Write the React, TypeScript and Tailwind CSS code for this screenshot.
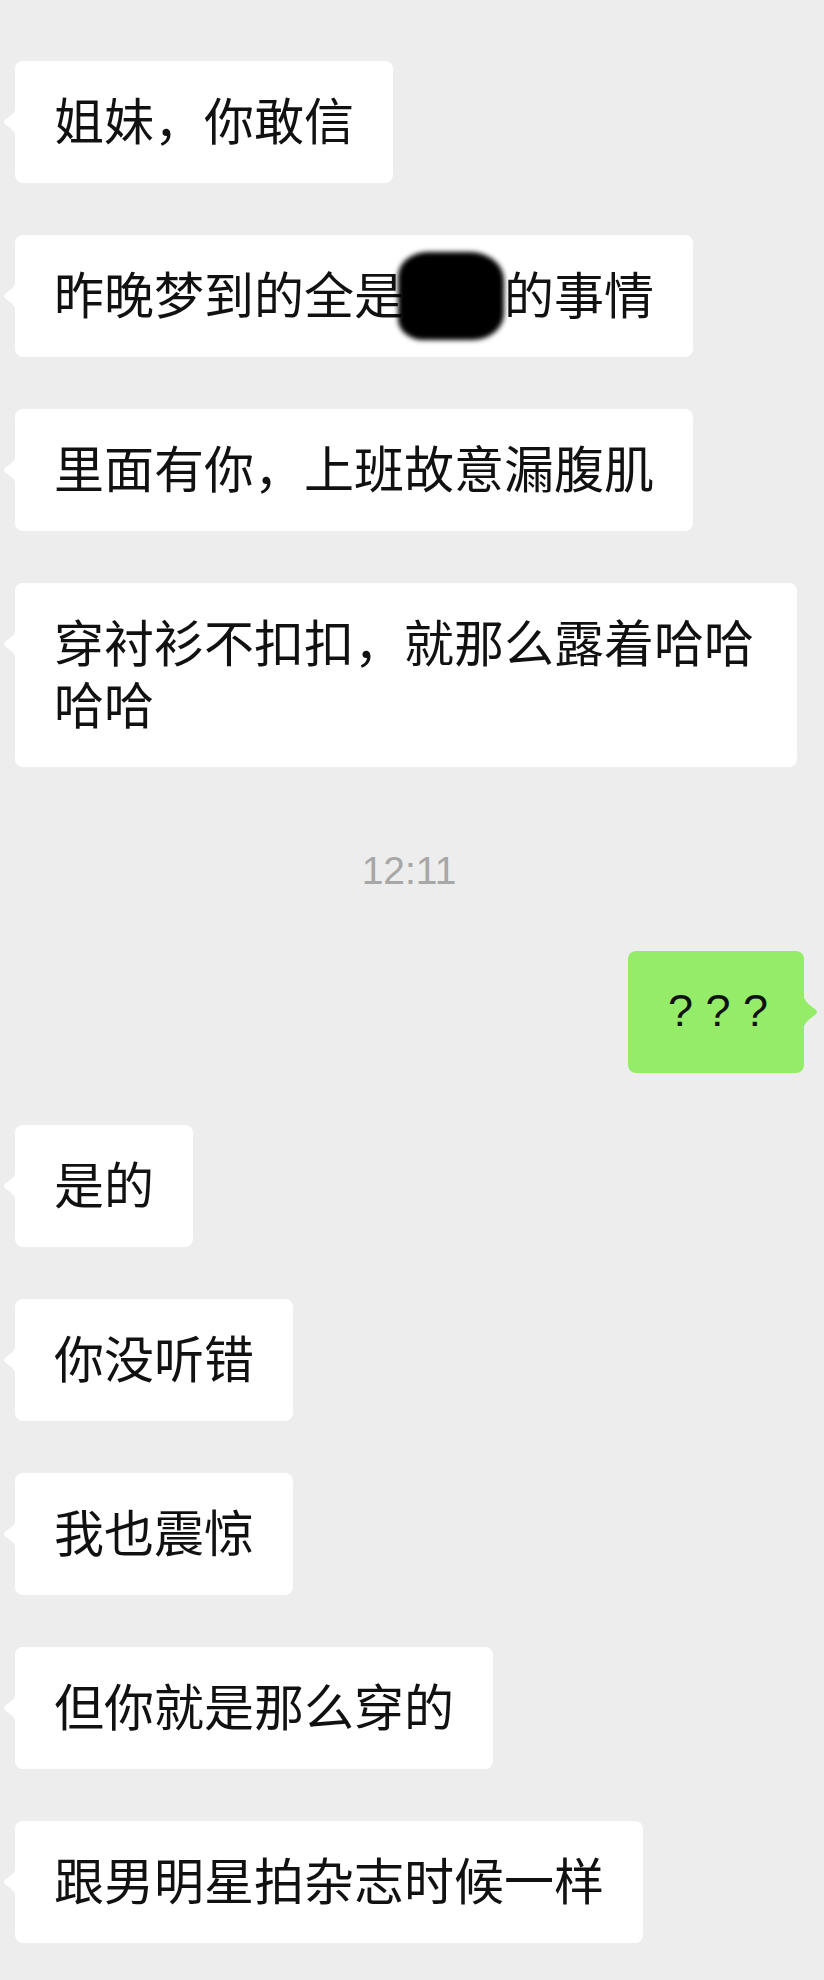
import React from 'react'

const cjk = { fontFamily: '"Noto Sans CJK SC", "Noto Sans", sans-serif' }

function LeftTail() {
    return (
        <svg className="absolute left-[-13px] top-[44px]" width="14" height="34" viewBox="0 0 14 34">
            <path d="M14 0 C14 7 10 10 4 14 Q0 17 4 20 C10 24 14 27 14 34 Z" fill="#ffffff" />
        </svg>
    )
}

function RightTail() {
    return (
        <svg className="absolute right-[-16px] top-[41px]" width="17" height="40" viewBox="0 0 17 40">
            <path d="M0 0 C0 8 5 12 12 17 Q16 20 12 23 C5 28 0 32 0 40 Z" fill="#95ec69" />
        </svg>
    )
}

function Left({ children }: { children: React.ReactNode }) {
    return (
        <div className="flex flex-row justify-start pl-[15px]">
            <div className="relative w-fit max-w-[782px] rounded-lg bg-white px-[39px] pt-[26px] pb-[34px] text-[50px] leading-[62px] text-[#111111]" style={cjk}>
                <LeftTail />
                {children}
            </div>
        </div>
    )
}

// the blacked-out name
function Censored() {
    return (
        <span className="relative inline-block h-[62px] w-[100px] align-top">
            <span className="absolute left-[-6px] top-[-9px] h-[88px] w-[106px] rounded-[28%_32%_30%_24%] bg-black blur-[2.5px]" />
        </span>
    )
}

export default function App() {
    return (
        <div className="min-h-[1980px] w-[824px] bg-[#ededed] pt-[61px] pb-[37px]">
            <div className="flex flex-col gap-[52px]">
                <Left>姐妹，你敢信</Left>
                <Left>昨晚梦到的全是<Censored />的事情</Left>
                <Left>里面有你，上班故意漏腹肌</Left>
                <Left>穿衬衫不扣扣，就那么露着哈哈哈哈</Left>

                <div className="flex h-[80px] items-center justify-center pt-[24px] pr-[6px]">
                    <p className="text-[39px] leading-[56px] text-[#a7a7a7]" style={{ fontFamily: '"Liberation Sans", Arial, sans-serif' }}>12:11</p>
                </div>

                <div className="flex flex-row justify-end pr-[20px]">
                    <div className="relative w-fit rounded-lg bg-[#95ec69] pl-[40px] pr-[36px] pt-[29px] pb-[31px] text-[45px] leading-[62px] text-[#111111]" style={{ fontFamily: '"Liberation Sans", Arial, sans-serif' }}>
                        <RightTail />
                        ? ? ?
                    </div>
                </div>

                <Left>是的</Left>
                <Left>你没听错</Left>
                <Left>我也震惊</Left>
                <Left>但你就是那么穿的</Left>
                <Left>跟男明星拍杂志时候一样</Left>
            </div>
        </div>
    )
}
